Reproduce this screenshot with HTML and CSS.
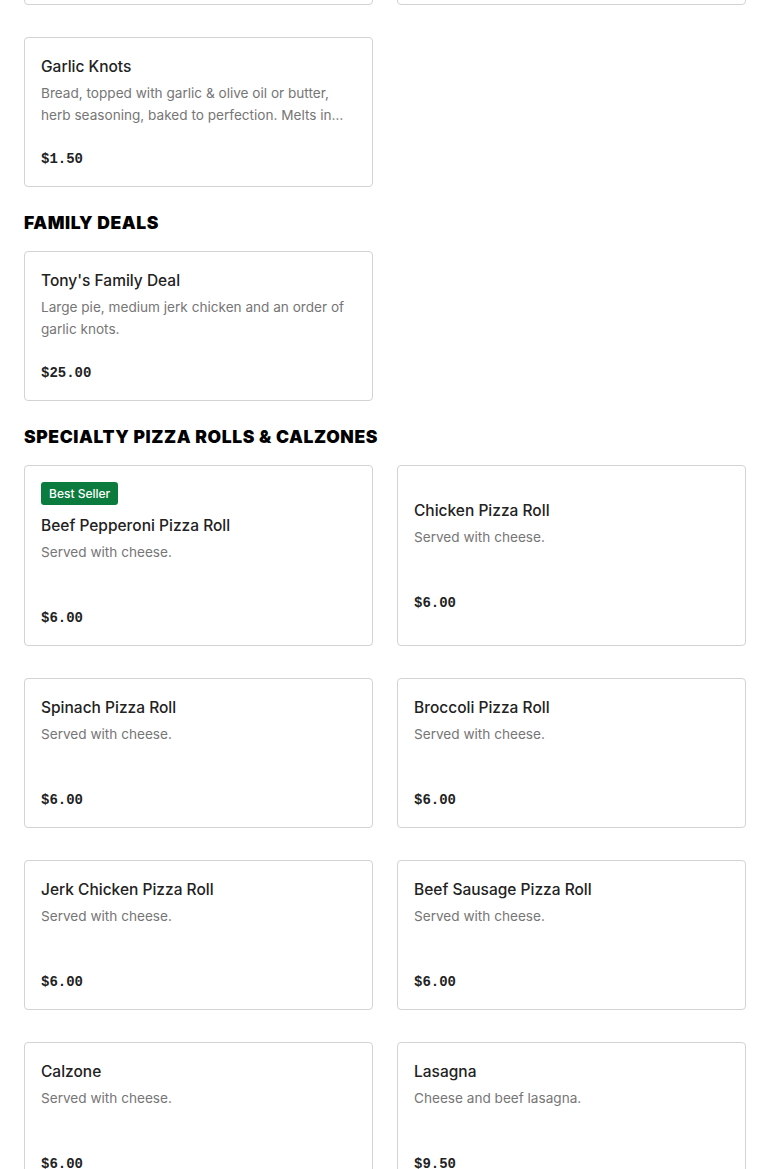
FILE: index.html
```html
<!DOCTYPE html>
<html>
<head>
<meta charset="utf-8">
<link rel="stylesheet" href="styles.css">
</head>
<body>
<div class="page">
  <div class="grid top-grid">
    <div class="card stub"></div>
    <div class="card stub"></div>
  </div>
  <div class="grid">
    <div class="card">
      <div class="body">
        <div class="title">Garlic Knots</div>
        <div class="desc">Bread, topped with garlic &amp; olive oil or butter, herb seasoning, baked to perfection. Melts in your mouth with every bite.</div>
        <div class="price">$1.50</div>
      </div>
    </div>
  </div>

  <h2 class="section">FAMILY DEALS</h2>
  <div class="grid">
    <div class="card">
      <div class="body">
        <div class="title">Tony's Family Deal</div>
        <div class="desc">Large pie, medium jerk chicken and an order of garlic knots.</div>
        <div class="price">$25.00</div>
      </div>
    </div>
  </div>

  <h2 class="section">SPECIALTY PIZZA ROLLS &amp; CALZONES</h2>
  <div class="grid">
    <div class="card">
      <div class="body">
        <span class="badge">Best Seller</span>
        <div class="title">Beef Pepperoni Pizza Roll</div>
        <div class="desc">Served with cheese.</div>
        <div class="price">$6.00</div>
      </div>
    </div>
    <div class="card">
      <div class="body">
        <div class="title">Chicken Pizza Roll</div>
        <div class="desc">Served with cheese.</div>
        <div class="price">$6.00</div>
      </div>
    </div>
    <div class="card">
      <div class="body">
        <div class="title">Spinach Pizza Roll</div>
        <div class="desc">Served with cheese.</div>
        <div class="price">$6.00</div>
      </div>
    </div>
    <div class="card">
      <div class="body">
        <div class="title">Broccoli Pizza Roll</div>
        <div class="desc">Served with cheese.</div>
        <div class="price">$6.00</div>
      </div>
    </div>
    <div class="card">
      <div class="body">
        <div class="title">Jerk Chicken Pizza Roll</div>
        <div class="desc">Served with cheese.</div>
        <div class="price">$6.00</div>
      </div>
    </div>
    <div class="card">
      <div class="body">
        <div class="title">Beef Sausage Pizza Roll</div>
        <div class="desc">Served with cheese.</div>
        <div class="price">$6.00</div>
      </div>
    </div>
    <div class="card">
      <div class="body">
        <div class="title">Calzone</div>
        <div class="desc">Served with cheese.</div>
        <div class="price">$6.00</div>
      </div>
    </div>
    <div class="card">
      <div class="body">
        <div class="title">Lasagna</div>
        <div class="desc">Cheese and beef lasagna.</div>
        <div class="price">$9.50</div>
      </div>
    </div>
  </div>
</div>
</body>
</html>
```
FILE: styles.css
```css
html, body {
  margin: 0;
  padding: 0;
  background: #ffffff;
}
body {
  font-family: "Inter", "Liberation Sans", sans-serif;
  color: #2a2a2a;
}
.page {
  padding: 0 24px;
  margin-top: -145px;
}
.grid {
  display: grid;
  grid-template-columns: 1fr 1fr;
  column-gap: 24px;
  row-gap: 32px;
}
.top-grid {
  margin-bottom: 32px;
}
.card {
  border: 1px solid #d3d3d3;
  border-radius: 4px;
  padding: 16px;
  min-height: 116px;
  display: flex;
  flex-direction: column;
  justify-content: center;
  background: #fff;
}
.stub {
  height: 116px;
}
.body {
  display: flex;
  flex-direction: column;
  align-items: flex-start;
}
.badge {
  background: #0b7b3e;
  color: #ffffff;
  font-size: 12px;
  font-weight: 500;
  line-height: 23px;
  padding: 0 8px;
  border-radius: 3px;
  margin-bottom: 8px;
}
.title {
  padding-top: 1px;
  font-size: 15.5px;
  font-weight: 500;
  line-height: 24px;
  color: #222;
}
.desc {
  margin-top: 3px;
  font-size: 13.6px;
  line-height: 22px;
  color: #767676;
  min-height: 44px;
  display: -webkit-box;
  -webkit-line-clamp: 2;
  -webkit-box-orient: vertical;
  overflow: hidden;
}
.price {
  margin-top: 22px;
  font-family: "Liberation Mono", monospace;
  font-weight: 700;
  font-size: 14px;
  line-height: 22px;
  color: #222;
}
.section {
  margin: 24px 0 16px;
  font-family: "Inter", "Liberation Sans", sans-serif;
  font-weight: 900;
  font-size: 17.5px;
  line-height: 24px;
  letter-spacing: 0.6px;
  color: #000;
}
```
